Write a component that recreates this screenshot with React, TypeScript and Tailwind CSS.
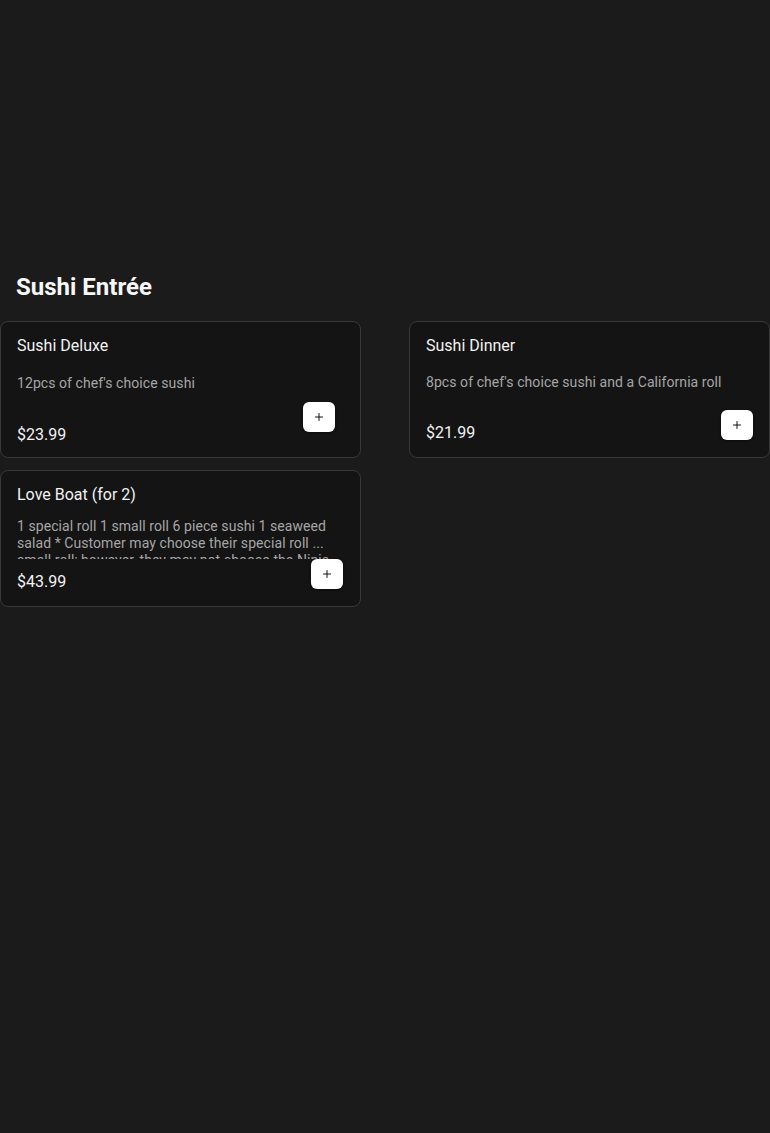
import { Plus } from "lucide-react";

type Item = {
  name: string;
  description: string;
  price: string;
  clamp?: boolean;
};

const items: Item[] = [
  { name: "Sushi Deluxe", description: "12pcs of chef's choice sushi", price: "$23.99" },
  { name: "Sushi Dinner", description: "8pcs of chef's choice sushi and a California roll", price: "$21.99" },
  {
    name: "Love Boat (for 2)",
    description:
      "1 special roll 1 small roll 6 piece sushi 1 seaweed salad * Customer may choose their special roll ... small roll; however, they may not choose the Ninja roll or the Dragon roll.",
    price: "$43.99",
    clamp: true,
  },
];

const AddButton = ({ className }: { className: string }) => (
  <button
    className={
      "flex h-[30px] w-[32px] items-center justify-center rounded-md bg-white text-[#111] shadow-[0_1px_3px_rgba(0,0,0,0.5)] " +
      className
    }
  >
    <Plus size={12} strokeWidth={2} />
  </button>
);

const ItemCard = ({ item, index }: { item: Item; index: number }) => {
  if (index === 0) {
    return (
      <div className="flex h-[137px] flex-col rounded-lg border border-[#393939] bg-[#141414] px-4 pt-3 pb-[10px]">
        <div className="text-base leading-6 text-[#f2f2f2]">{item.name}</div>
        <div className="mt-[15px] text-sm leading-5 tracking-[0.07px] text-[#a6a6a6]">{item.description}</div>
        <div className="mt-auto flex items-end justify-between">
          <div className="text-base leading-6 text-[#f2f2f2]">{item.price}</div>
          <AddButton className="mr-[9px] mb-[15px]" />
        </div>
      </div>
    );
  }
  if (item.clamp) {
    return (
      <div className="flex h-[137px] flex-col rounded-lg border border-[#393939] bg-[#141414] px-4 pt-3 pb-3">
        <div className="text-base leading-6 text-[#f2f2f2]">{item.name}</div>
        <div className="mt-[11px] h-[47px] overflow-hidden text-sm leading-[17px] tracking-[0.07px] text-[#a6a6a6]">
          {item.description}
        </div>
        <div className="mt-auto flex items-end justify-between">
          <div className="text-base leading-6 text-[#f2f2f2]">{item.price}</div>
          <AddButton className="mr-[1px] mb-[5px]" />
        </div>
      </div>
    );
  }
  return (
    <div className="flex h-[137px] flex-col rounded-lg border border-[#393939] bg-[#141414] px-4 pt-3 pb-3">
      <div className="text-base leading-6 text-[#f2f2f2]">{item.name}</div>
      <div className="mt-[14px] text-sm leading-5 tracking-[0.07px] text-[#a6a6a6]">{item.description}</div>
      <div className="mt-auto flex items-end justify-between">
        <div className="text-base leading-6 text-[#f2f2f2]">{item.price}</div>
        <AddButton className="mb-[5px]" />
      </div>
    </div>
  );
};

export default function App() {
  return (
    <div className="min-h-[1133px] w-full bg-[#1b1b1b] font-['Roboto',sans-serif] pt-[271px]">
      <h2 className="px-4 text-2xl leading-8 font-bold text-[#f7f7f7]">Sushi Entrée</h2>
      <div className="mt-[18px] grid grid-cols-2 gap-x-12 gap-y-3">
        {items.map((item, i) => (
          <ItemCard key={item.name} item={item} index={i} />
        ))}
      </div>
    </div>
  );
}
